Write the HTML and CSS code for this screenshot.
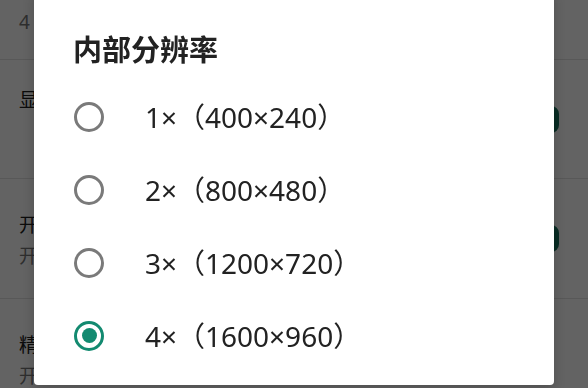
FILE: index.html
```html
<!DOCTYPE html>
<html lang="zh-CN">
<head>
<meta charset="utf-8">
<title>内部分辨率</title>
<link rel="stylesheet" href="styles.css">
</head>
<body>
<div class="page">
  <div class="item item-top">
    <div class="text"><div class="sub">4 核心</div></div>
  </div>
  <div class="item item-one">
    <div class="text"><div class="title">显示帧率</div></div>
    <div class="switch"></div>
  </div>
  <div class="item item-two">
    <div class="text"><div class="title">开启垂直同步</div><div class="sub">开启后画面更流畅</div></div>
    <div class="switch"></div>
  </div>
  <div class="item item-last">
    <div class="text"><div class="title">精确渲染</div><div class="sub">开启后可能降低性能</div></div>
  </div>
</div>
<div class="scrim"></div>
<div class="dialog">
  <div class="dlg-title">内部分辨率</div>
  <div class="options">
    <div class="option"><span class="radio"></span><span class="label">1×（400×240）</span></div>
    <div class="option"><span class="radio"></span><span class="label">2×（800×480）</span></div>
    <div class="option"><span class="radio"></span><span class="label">3×（1200×720）</span></div>
    <div class="option"><span class="radio checked"></span><span class="label">4×（1600×960）</span></div>
  </div>
</div>
</body>
</html>
```

FILE: styles.css
```css
html, body {
  margin: 0;
  padding: 0;
  width: 588px;
  height: 388px;
  overflow: hidden;
  background: #ffffff;
  font-family: "Noto Sans", "Noto Sans CJK SC", sans-serif;
}

.page {
  display: flex;
  flex-direction: column;
}

.item {
  display: flex;
  align-items: center;
  justify-content: space-between;
  padding: 0 29px 0 19px;
  border-bottom: 1px solid #e2e2e2;
  box-sizing: border-box;
}

.item-top {
  height: 60px;
  align-items: flex-start;
  padding-top: 9px;
}

.item-one {
  height: 119px;
}

.item-one .text {
  align-self: flex-start;
  padding-top: 27px;
}

.item-two {
  height: 120px;
}

.item-two .text,
.item-last .text {
  align-self: flex-start;
  padding-top: 33px;
}

.item-last {
  height: 89px;
  border-bottom: none;
}

.title {
  font-size: 19px;
  line-height: 26px;
  color: #212121;
}

.sub {
  font-size: 19px;
  line-height: 26px;
  color: #777777;
  margin-top: 5px;
}

.item-top .sub {
  margin-top: 0;
}

.switch {
  width: 52px;
  height: 27px;
  border-radius: 8px;
  background: #17735d;
}

.scrim {
  position: fixed;
  inset: 0;
  background: rgba(0, 0, 0, 0.61);
}

.dialog {
  position: absolute;
  left: 34px;
  top: -10px;
  width: 520px;
  height: 395px;
  box-sizing: border-box;
  background: #ffffff;
  border-radius: 4px;
  padding: 42px 0 13px 39px;
  box-shadow: 0 4px 12px rgba(0, 0, 0, 0.2);
}

.dlg-title {
  font-size: 29px;
  line-height: 36px;
  font-weight: 700;
  color: #222222;
}

.options {
  margin-top: 12px;
  display: flex;
  flex-direction: column;
}

.option {
  height: 73px;
  display: flex;
  align-items: center;
  gap: 41px;
  padding-left: 1px;
}

.radio {
  width: 30px;
  height: 30px;
  box-sizing: border-box;
  border: 3px solid #7a7a7a;
  border-radius: 50%;
  display: flex;
  align-items: center;
  justify-content: center;
  flex: none;
}

.radio.checked {
  border-color: #138a70;
}

.radio.checked::after {
  content: "";
  width: 15px;
  height: 15px;
  border-radius: 50%;
  background: #138a70;
}

.label {
  font-size: 28px;
  line-height: 36px;
  color: #222222;
}
```
